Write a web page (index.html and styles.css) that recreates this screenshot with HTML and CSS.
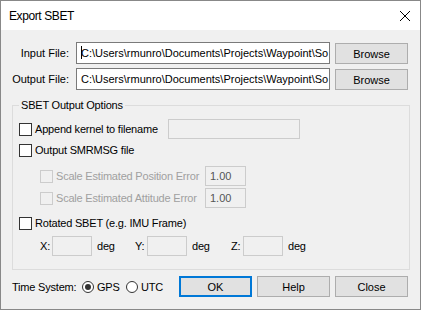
FILE: index.html
```html
<!DOCTYPE html>
<html>
<head>
<meta charset="utf-8">
<link rel="stylesheet" href="styles.css">
</head>
<body>
<div class="window">
  <div class="titlebar">
    <span class="title">Export SBET</span>
    <svg class="close" width="10" height="10" viewBox="0 0 10 10"><path d="M0 0L10 10M10 0L0 10" stroke="#000" stroke-width="1" fill="none"/></svg>
  </div>
  <div class="content">
    <div class="file-row">
      <span class="file-label">Input File:</span>
      <div class="path"><span class="caret"></span>C:\Users\rmunro\Documents\Projects\Waypoint\So</div>
      <button class="btn browse">Browse</button>
    </div>
    <div class="file-row">
      <span class="file-label">Output File:</span>
      <div class="path">C:\Users\rmunro\Documents\Projects\Waypoint\So</div>
      <button class="btn browse">Browse</button>
    </div>
    <fieldset class="group">
      <legend>SBET Output Options</legend>
      <div class="row r1">
        <span class="check w-append"><span class="cb"></span>Append kernel to filename</span>
        <span class="field wide"></span>
      </div>
      <div class="row r2">
        <span class="check"><span class="cb"></span>Output SMRMSG file</span>
      </div>
      <div class="row r3 indent">
        <span class="check disabled w-scale"><span class="cb"></span>Scale Estimated Position Error</span>
        <span class="field value">1.00</span>
      </div>
      <div class="row r4 indent">
        <span class="check disabled w-scale"><span class="cb"></span>Scale Estimated Attitude Error</span>
        <span class="field value">1.00</span>
      </div>
      <div class="row r5">
        <span class="check"><span class="cb"></span>Rotated SBET (e.g. IMU Frame)</span>
      </div>
      <div class="row r6 indent">
        <span class="axis"><span class="axis-label">X:</span><span class="field small"></span><span class="unit">deg</span></span>
        <span class="axis"><span class="axis-label">Y:</span><span class="field small"></span><span class="unit">deg</span></span>
        <span class="axis axis-z"><span class="axis-label">Z:</span><span class="field small"></span><span class="unit">deg</span></span>
      </div>
    </fieldset>
    <div class="footer">
      <span class="ts-label">Time System:</span>
      <span class="radio-opt gps"><span class="radio checked"></span>GPS</span>
      <span class="radio-opt"><span class="radio"></span>UTC</span>
      <button class="btn ok">OK</button>
      <button class="btn">Help</button>
      <button class="btn">Close</button>
    </div>
  </div>
</div>
</body>
</html>
```
FILE: styles.css
```css
html, body {
  margin: 0;
  padding: 0;
  background: #f0f0f0;
}
body {
  font-family: "Liberation Sans", Arial, sans-serif;
  font-size: 11px;
  letter-spacing: -0.2px;
  color: #000;
}
.window {
  width: 421px;
  height: 310px;
  box-sizing: border-box;
  border: 1px solid #888;
  background: #f0f0f0;
  display: flex;
  flex-direction: column;
}
.titlebar {
  height: 29px;
  flex: none;
  background: #fff;
  display: flex;
  align-items: center;
  justify-content: space-between;
  padding: 0 10px 0 8px;
}
.title {
  font-size: 12px;
  letter-spacing: -0.4px;
  padding-top: 1px;
}
.close {
  display: block;
}
.content {
  flex: 1;
  padding: 12px 11px 12px;
  display: flex;
  flex-direction: column;
}
.file-row {
  display: flex;
  height: 22px;
}
.file-row + .file-row {
  margin-top: 4px;
}
.file-label {
  flex: 1;
  text-align: right;
  padding-right: 7px;
  line-height: 22px;
  letter-spacing: 0;
}
.path {
  width: 254px;
  height: 22px;
  box-sizing: border-box;
  border: 1px solid #7a7a7a;
  background: #fff;
  padding: 0 0 0 4px;
  line-height: 20px;
  letter-spacing: 0;
  white-space: nowrap;
  overflow: hidden;
}
.caret {
  display: inline-block;
  width: 1px;
  height: 13px;
  background: #000;
  vertical-align: -2px;
  margin-right: -1px;
}
.btn {
  width: 73px;
  height: 21px;
  box-sizing: border-box;
  border: 1px solid #adadad;
  background: #e1e1e1;
  font: inherit;
  letter-spacing: 0;
  color: #000;
  padding: 0;
  margin: 0 0 0 5px;
  flex: none;
}
.browse {
  align-self: flex-start;
  margin-top: 1px;
  margin-right: 1px;
}
.group {
  margin: 8px -1px 0 0;
  padding: 7px 0 13px 6px;
  border: 1px solid #dcdcdc;
  min-width: 0;
}
.group legend {
  padding: 0 2px;
  line-height: 14px;
}
.row {
  display: flex;
  align-items: center;
}
.r1 { height: 20px; }
.r2 { height: 16px; margin-top: 3px; }
.r3 { height: 20px; margin-top: 8px; }
.r4 { height: 20px; margin-top: 2px; }
.r5 { height: 16px; margin-top: 7px; }
.r6 { height: 20px; margin-top: 5px; }
.indent {
  margin-left: 21px;
}
.check {
  display: flex;
  align-items: center;
  white-space: nowrap;
}
.w-append { width: 149px; }
.w-scale { width: 165px; }
.cb {
  width: 13px;
  height: 13px;
  box-sizing: border-box;
  border: 1px solid #333;
  background: #fff;
  margin-right: 3px;
  flex: none;
}
.disabled {
  color: #a0a0a0;
}
.disabled .cb {
  border-color: #cccccc;
  background: #f0f0f0;
}
.field {
  display: block;
  height: 20px;
  box-sizing: border-box;
  border: 1px solid #cccccc;
  background: #f0f0f0;
  flex: none;
}
.wide { width: 132px; }
.value {
  width: 41px;
  padding-left: 4px;
  line-height: 18px;
  letter-spacing: 0;
  color: #555;
}
.small { width: 40px; }
.axis {
  display: flex;
  align-items: center;
  width: 95px;
}
.axis-z {
  margin-left: 1px;
}
.axis-label {
  width: 12px;
}
.unit {
  margin-left: 5px;
}
.footer {
  margin-top: 6px;
  height: 21px;
  display: flex;
  align-items: center;
}
.ts-label {
  width: 70px;
}
.radio-opt {
  display: flex;
  align-items: center;
}
.gps {
  width: 44px;
}
.radio {
  width: 12px;
  height: 12px;
  box-sizing: border-box;
  border: 1px solid #333;
  border-radius: 50%;
  background: #fff;
  margin-right: 3px;
  display: flex;
  align-items: center;
  justify-content: center;
}
.radio.checked::after {
  content: "";
  width: 6px;
  height: 6px;
  border-radius: 50%;
  background: #333;
}
.ok {
  margin-left: auto;
  border: 2px solid #0078d7;
}
.footer .btn:last-child {
  margin-right: 1px;
}
```
